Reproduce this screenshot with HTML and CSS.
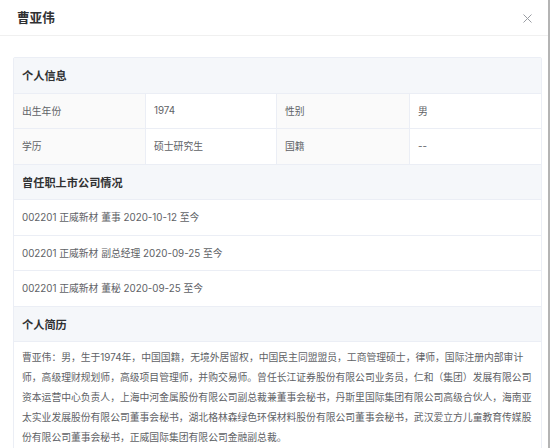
FILE: index.html
```html
<!DOCTYPE html>
<html lang="zh-CN">
<head>
<meta charset="utf-8">
<title>曹亚伟</title>
<link rel="stylesheet" href="styles.css">
</head>
<body>
<div class="dialog">
  <div class="dialog-header">
    <span class="dialog-title">曹亚伟</span>
    <span class="dialog-close" aria-label="关闭">
      <svg width="9" height="9" viewBox="0 0 9 9"><path d="M0.5 0.5L8.5 8.5M8.5 0.5L0.5 8.5" stroke="#9a9da3" stroke-width="1" fill="none"/></svg>
    </span>
  </div>
  <div class="dialog-body">
    <div class="card">
      <div class="section-title">个人信息</div>
      <div class="info-row">
        <div class="cell label">出生年份</div>
        <div class="cell">1974</div>
        <div class="cell label">性别</div>
        <div class="cell last">男</div>
      </div>
      <div class="info-row">
        <div class="cell label">学历</div>
        <div class="cell">硕士研究生</div>
        <div class="cell label">国籍</div>
        <div class="cell last">--</div>
      </div>
      <div class="section-title">曾任职上市公司情况</div>
      <div class="list-row">002201 正威新材 董事 2020-10-12 至今</div>
      <div class="list-row">002201 正威新材 副总经理 2020-09-25 至今</div>
      <div class="list-row">002201 正威新材 董秘 2020-09-25 至今</div>
      <div class="section-title">个人简历</div>
      <div class="resume">曹亚伟：男，生于1974年，中国国籍，无境外居留权，中国民主同盟盟员，工商管理硕士，律师，国际注册内部审计师，高级理财规划师，高级项目管理师，并购交易师。曾任长江证券股份有限公司业务员，仁和（集团）发展有限公司资本运营中心负责人，上海中河金属股份有限公司副总裁兼董事会秘书，丹斯里国际集团有限公司高级合伙人，海南亚太实业发展股份有限公司董事会秘书，湖北格林森绿色环保材料股份有限公司董事会秘书，武汉爱立方儿童教育传媒股份有限公司董事会秘书，正威国际集团有限公司金融副总裁。</div>
    </div>
  </div>
</div>
</body>
</html>
```

FILE: styles.css
```css
* { box-sizing: border-box; }
html, body {
  margin: 0;
  padding: 0;
  background: #ffffff;
}
body {
  font-family: Inter, "Noto Sans CJK SC", "Noto Sans", sans-serif;
  color: #606266;
  width: 550px;
  height: 448px;
  overflow: hidden;
}
.dialog {
  width: 550px;
  height: 448px;
  border-right: 2px solid #b4b4b4;
  background: #fff;
  overflow: hidden;
}
.dialog-header {
  height: 36px;
  border-bottom: 1px solid #f0f0f0;
  display: flex;
  align-items: center;
  justify-content: space-between;
  padding: 0 11px 0 17px;
}
.dialog-title {
  font-size: 12.6px;
  font-weight: 700;
  color: #303133;
  line-height: 1;
  margin-top: 1px;
}
.dialog-close {
  display: flex;
  width: 20px;
  height: 20px;
  align-items: center;
  justify-content: center;
  margin-top: 2px;
}
.dialog-body {
  padding: 21px 0 0 13px;
}
.card {
  width: 529px;
  border: 1px solid #ebeef5;
  border-radius: 2px;
}
.section-title {
  height: 35.5px;
  background: #f5f7fa;
  border-bottom: 1px solid #ebeef5;
  display: flex;
  align-items: center;
  padding-left: 8px;
  font-size: 11.2px;
  font-weight: 700;
  color: #303133;
}
.info-row {
  display: grid;
  grid-template-columns: 132px 131px 133px 1fr;
  height: 35.5px;
  border-bottom: 1px solid #ebeef5;
}
.cell {
  display: flex;
  align-items: center;
  padding-left: 8px;
  font-size: 9.8px;
  color: #606266;
  border-right: 1px solid #ebeef5;
}
.cell.last { border-right: none; }
.cell.label { background: #fafafa; }
.list-row {
  height: 35.5px;
  border-bottom: 1px solid #ebeef5;
  display: flex;
  align-items: center;
  padding-left: 8px;
  font-size: 9.8px;
  color: #606266;
}
.resume {
  padding: 6px 8px 2px 8px;
  font-size: 9.8px;
  line-height: 20px;
  color: #606266;
}
```
